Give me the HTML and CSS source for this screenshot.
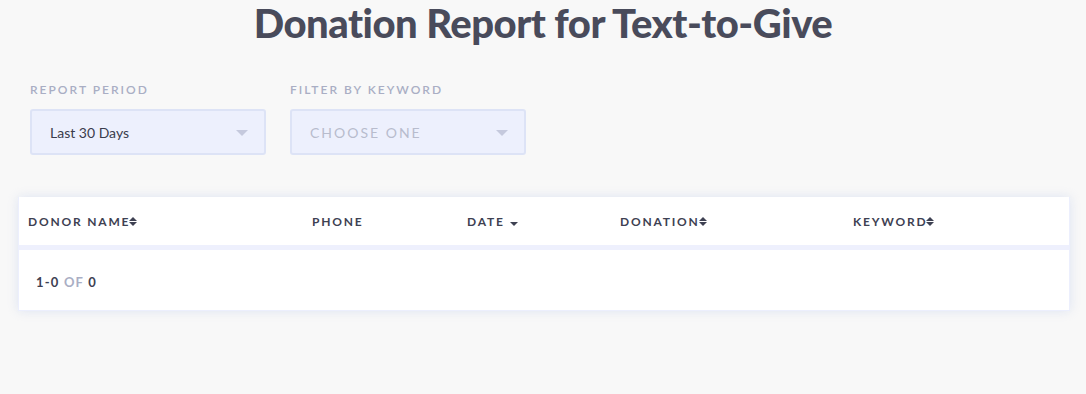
FILE: index.html
```html
<!DOCTYPE html>
<html>
<head>
<meta charset="utf-8">
<link rel="stylesheet" href="styles.css">
</head>
<body>
<div class="page">
  <h1 class="title">Donation Report for Text-to-Give</h1>
  <div class="filters">
    <div class="field">
      <div class="label">Report Period</div>
      <div class="select">
        <span class="value">Last 30 Days</span>
        <span class="caret"></span>
      </div>
    </div>
    <div class="field">
      <div class="label">Filter by Keyword</div>
      <div class="select">
        <span class="placeholder">Choose One</span>
        <span class="caret"></span>
      </div>
    </div>
  </div>
  <div class="card">
    <div class="thead">
      <div class="th">Donor Name<span class="sort"><i class="up"></i><i class="down"></i></span></div>
      <div class="th">Phone</div>
      <div class="th">Date<span class="sort single"><i class="down"></i></span></div>
      <div class="th">Donation<span class="sort"><i class="up"></i><i class="down"></i></span></div>
      <div class="th">Keyword<span class="sort"><i class="up"></i><i class="down"></i></span></div>
    </div>
    <div class="tbody">
      <div class="pager">1-0 <span class="muted">of</span> 0</div>
    </div>
  </div>
</div>
</body>
</html>
```
FILE: styles.css
```css
html, body {
  margin: 0;
  padding: 0;
  background: #f8f8f8;
  font-family: Lato, "Open Sans", sans-serif;
}
.page {
  width: 1086px;
  height: 394px;
  box-sizing: border-box;
}
.title {
  margin: 0;
  height: 46px;
  line-height: 46px;
  text-align: center;
  font-size: 40px;
  font-weight: 900;
  color: #494b5b;
  letter-spacing: -0.5px;
}
.filters {
  display: flex;
  gap: 24px;
  padding-left: 30px;
  margin-top: 36px;
}
.field {
  width: 236px;
}
.label {
  font-size: 12px;
  line-height: 16px;
  letter-spacing: 2px;
  text-transform: uppercase;
  color: #a9aec4;
  font-weight: 600;
}
.select {
  margin-top: 11px;
  height: 46px;
  box-sizing: border-box;
  background: #edf0fd;
  border: 2px solid #dde3f6;
  border-radius: 3px;
  display: flex;
  align-items: center;
  justify-content: space-between;
  padding: 0 16px 0 18px;
}
.value {
  font-size: 14px;
  color: #3a3c4c;
}
.placeholder {
  font-size: 14px;
  letter-spacing: 2px;
  text-transform: uppercase;
  color: #b8bccd;
}
.caret {
  width: 0;
  height: 0;
  border-left: 6px solid transparent;
  border-right: 6px solid transparent;
  border-top: 6px solid #c5c9dd;
  margin-top: 2px;
}
.card {
  margin: 42px 16px 0 18px;
  background: #eef0fd;
  box-shadow: 0 0 10px rgba(190, 205, 235, 0.45);
  border: 1px solid #eceffd;
  border-top: none;
}
.thead {
  background: #fff;
  height: 48px;
  display: grid;
  grid-template-columns: 284px 155px 153px 233px 1fr;
  align-items: center;
  padding-left: 9px;
  padding-top: 1px;
  box-sizing: border-box;
}
.th {
  font-size: 12px;
  font-weight: 700;
  letter-spacing: 1.8px;
  text-transform: uppercase;
  color: #3e4152;
  display: flex;
  align-items: center;
}
.sort {
  display: inline-flex;
  flex-direction: column;
  gap: 1px;
  margin-left: -1px;
}
.sort.single {
  margin-left: 5px;
  margin-top: 4px;
}
.sort i {
  display: block;
  width: 0;
  height: 0;
  border-left: 4px solid transparent;
  border-right: 4px solid transparent;
}
.sort .up {
  border-bottom: 4px solid #3e4152;
}
.sort .down {
  border-top: 4px solid #3e4152;
}
.tbody {
  margin-top: 5px;
  background: #fff;
  height: 60px;
  display: flex;
  align-items: center;
  padding-left: 17px;
  padding-top: 4px;
  box-sizing: border-box;
}
.pager {
  font-size: 13px;
  font-weight: 700;
  color: #3e4152;
  letter-spacing: 1.2px;
}
.muted {
  color: #a9aec4;
  text-transform: uppercase;
}
```
